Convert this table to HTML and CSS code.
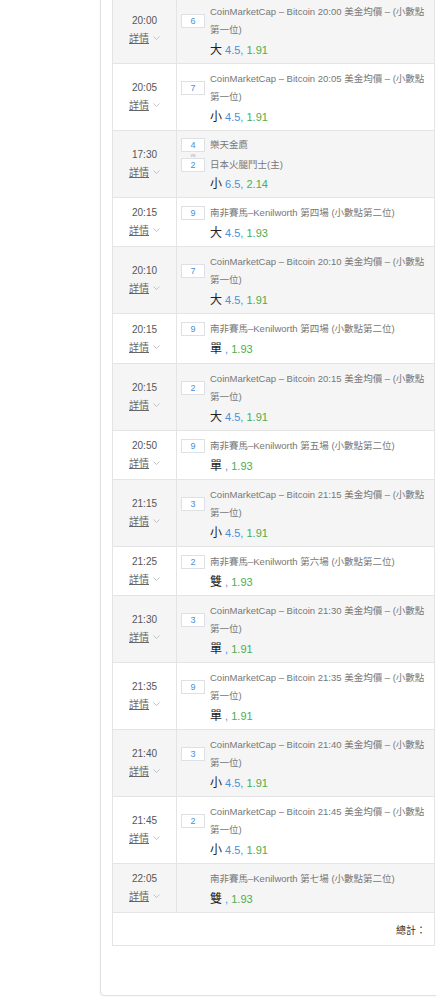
FILE: index.html
```html
<html>
<head>
    <meta charset="utf-8">
    <link rel="stylesheet" href="styles.css">
</head>
<body>
    <div class="panel">
        <table class="bets">
            <colgroup>
                <col class="col-time">
                <col>
            </colgroup>
            <tr class="alt">
                <td class="time">20:00<br><a class="more">詳情</a><svg class="chev" width="7" height="4" viewBox="0 0 7 4"><path d="M0.5 0.5L3.5 3.5L6.5 0.5"/></svg></td>
                <td class="info">
                    <div class="head"><span class="num">6</span><span class="title">CoinMarketCap – Bitcoin 20:00 美金均價 – (小數點第一位)</span></div>
                    <div class="bet"><span class="pick">大</span> <span class="line">4.5,</span> <span class="odds">1.91</span></div>
                </td>
            </tr>
            <tr>
                <td class="time">20:05<br><a class="more">詳情</a><svg class="chev" width="7" height="4" viewBox="0 0 7 4"><path d="M0.5 0.5L3.5 3.5L6.5 0.5"/></svg></td>
                <td class="info">
                    <div class="head"><span class="num">7</span><span class="title">CoinMarketCap – Bitcoin 20:05 美金均價 – (小數點第一位)</span></div>
                    <div class="bet"><span class="pick">小</span> <span class="line">4.5,</span> <span class="odds">1.91</span></div>
                </td>
            </tr>
            <tr class="alt">
                <td class="time">17:30<br><a class="more">詳情</a><svg class="chev" width="7" height="4" viewBox="0 0 7 4"><path d="M0.5 0.5L3.5 3.5L6.5 0.5"/></svg></td>
                <td class="info">
                    <div class="match">
                        <div class="team"><span class="num">4</span><span class="title">樂天金鷹</span></div>
                        <div class="vs">vs</div>
                        <div class="team"><span class="num">2</span><span class="title">日本火腿鬥士(主)</span></div>
                    </div>
                    <div class="bet"><span class="pick">小</span> <span class="line">6.5,</span> <span class="odds">2.14</span></div>
                </td>
            </tr>
            <tr>
                <td class="time">20:15<br><a class="more">詳情</a><svg class="chev" width="7" height="4" viewBox="0 0 7 4"><path d="M0.5 0.5L3.5 3.5L6.5 0.5"/></svg></td>
                <td class="info">
                    <div class="head"><span class="num">9</span><span class="title">南非賽馬–Kenilworth 第四場 (小數點第二位)</span></div>
                    <div class="bet"><span class="pick">大</span> <span class="line">4.5,</span> <span class="odds">1.93</span></div>
                </td>
            </tr>
            <tr class="alt">
                <td class="time">20:10<br><a class="more">詳情</a><svg class="chev" width="7" height="4" viewBox="0 0 7 4"><path d="M0.5 0.5L3.5 3.5L6.5 0.5"/></svg></td>
                <td class="info">
                    <div class="head"><span class="num">7</span><span class="title">CoinMarketCap – Bitcoin 20:10 美金均價 – (小數點第一位)</span></div>
                    <div class="bet"><span class="pick">大</span> <span class="line">4.5,</span> <span class="odds">1.91</span></div>
                </td>
            </tr>
            <tr>
                <td class="time">20:15<br><a class="more">詳情</a><svg class="chev" width="7" height="4" viewBox="0 0 7 4"><path d="M0.5 0.5L3.5 3.5L6.5 0.5"/></svg></td>
                <td class="info">
                    <div class="head"><span class="num">9</span><span class="title">南非賽馬–Kenilworth 第四場 (小數點第二位)</span></div>
                    <div class="bet"><span class="pick">單</span> <span class="line">,</span> <span class="odds">1.93</span></div>
                </td>
            </tr>
            <tr class="alt">
                <td class="time">20:15<br><a class="more">詳情</a><svg class="chev" width="7" height="4" viewBox="0 0 7 4"><path d="M0.5 0.5L3.5 3.5L6.5 0.5"/></svg></td>
                <td class="info">
                    <div class="head"><span class="num">2</span><span class="title">CoinMarketCap – Bitcoin 20:15 美金均價 – (小數點第一位)</span></div>
                    <div class="bet"><span class="pick">大</span> <span class="line">4.5,</span> <span class="odds">1.91</span></div>
                </td>
            </tr>
            <tr>
                <td class="time">20:50<br><a class="more">詳情</a><svg class="chev" width="7" height="4" viewBox="0 0 7 4"><path d="M0.5 0.5L3.5 3.5L6.5 0.5"/></svg></td>
                <td class="info">
                    <div class="head"><span class="num">9</span><span class="title">南非賽馬–Kenilworth 第五場 (小數點第二位)</span></div>
                    <div class="bet"><span class="pick">單</span> <span class="line">,</span> <span class="odds">1.93</span></div>
                </td>
            </tr>
            <tr class="alt">
                <td class="time">21:15<br><a class="more">詳情</a><svg class="chev" width="7" height="4" viewBox="0 0 7 4"><path d="M0.5 0.5L3.5 3.5L6.5 0.5"/></svg></td>
                <td class="info">
                    <div class="head"><span class="num">3</span><span class="title">CoinMarketCap – Bitcoin 21:15 美金均價 – (小數點第一位)</span></div>
                    <div class="bet"><span class="pick">小</span> <span class="line">4.5,</span> <span class="odds">1.91</span></div>
                </td>
            </tr>
            <tr>
                <td class="time">21:25<br><a class="more">詳情</a><svg class="chev" width="7" height="4" viewBox="0 0 7 4"><path d="M0.5 0.5L3.5 3.5L6.5 0.5"/></svg></td>
                <td class="info">
                    <div class="head"><span class="num">2</span><span class="title">南非賽馬–Kenilworth 第六場 (小數點第二位)</span></div>
                    <div class="bet"><span class="pick">雙</span> <span class="line">,</span> <span class="odds">1.93</span></div>
                </td>
            </tr>
            <tr class="alt">
                <td class="time">21:30<br><a class="more">詳情</a><svg class="chev" width="7" height="4" viewBox="0 0 7 4"><path d="M0.5 0.5L3.5 3.5L6.5 0.5"/></svg></td>
                <td class="info">
                    <div class="head"><span class="num">3</span><span class="title">CoinMarketCap – Bitcoin 21:30 美金均價 – (小數點第一位)</span></div>
                    <div class="bet"><span class="pick">單</span> <span class="line">,</span> <span class="odds">1.91</span></div>
                </td>
            </tr>
            <tr>
                <td class="time">21:35<br><a class="more">詳情</a><svg class="chev" width="7" height="4" viewBox="0 0 7 4"><path d="M0.5 0.5L3.5 3.5L6.5 0.5"/></svg></td>
                <td class="info">
                    <div class="head"><span class="num">9</span><span class="title">CoinMarketCap – Bitcoin 21:35 美金均價 – (小數點第一位)</span></div>
                    <div class="bet"><span class="pick">單</span> <span class="line">,</span> <span class="odds">1.91</span></div>
                </td>
            </tr>
            <tr class="alt">
                <td class="time">21:40<br><a class="more">詳情</a><svg class="chev" width="7" height="4" viewBox="0 0 7 4"><path d="M0.5 0.5L3.5 3.5L6.5 0.5"/></svg></td>
                <td class="info">
                    <div class="head"><span class="num">3</span><span class="title">CoinMarketCap – Bitcoin 21:40 美金均價 – (小數點第一位)</span></div>
                    <div class="bet"><span class="pick">小</span> <span class="line">4.5,</span> <span class="odds">1.91</span></div>
                </td>
            </tr>
            <tr>
                <td class="time">21:45<br><a class="more">詳情</a><svg class="chev" width="7" height="4" viewBox="0 0 7 4"><path d="M0.5 0.5L3.5 3.5L6.5 0.5"/></svg></td>
                <td class="info">
                    <div class="head"><span class="num">2</span><span class="title">CoinMarketCap – Bitcoin 21:45 美金均價 – (小數點第一位)</span></div>
                    <div class="bet"><span class="pick">小</span> <span class="line">4.5,</span> <span class="odds">1.91</span></div>
                </td>
            </tr>
            <tr class="alt">
                <td class="time">22:05<br><a class="more">詳情</a><svg class="chev" width="7" height="4" viewBox="0 0 7 4"><path d="M0.5 0.5L3.5 3.5L6.5 0.5"/></svg></td>
                <td class="info">
                    <div class="head"><span class="num empty"></span><span class="title">南非賽馬–Kenilworth 第七場 (小數點第二位)</span></div>
                    <div class="bet"><span class="pick">雙</span> <span class="line">,</span> <span class="odds">1.93</span></div>
                </td>
            </tr>
            <tr class="total">
                <td colspan="2">總計：</td>
            </tr>
        </table>
    </div>
</body>
</html>
```

FILE: styles.css
```css
body {
    margin: 0;
    overflow-x: hidden;
    font-family: "Liberation Sans", "Noto Sans CJK TC", sans-serif;
    background-color: #ffffff;
    color: #333333;
}

.panel {
    width: 323px;
    margin: -15px 0 0 100px;
    padding: 10px 11px 49px;
    border: 1px solid #e2e2e2;
    border-radius: 4px;
    box-shadow: 0 0 2px rgba(0, 0, 0, 0.08);
    background-color: #ffffff;
}

.bets {
    width: 323px;
    border-collapse: collapse;
    table-layout: fixed;
}

.col-time {
    width: 64px;
}

.bets td {
    border: 1px solid #e4e4e4;
    padding: 0;
}

.bets tr.alt td {
    background-color: #f5f5f5;
}

.time {
    text-align: center;
    vertical-align: middle;
    font-size: 10px;
    line-height: 18px;
    color: #555555;
}

.more {
    color: #666666;
    text-decoration: underline;
}

.chev {
    margin-left: 4px;
    vertical-align: 2px;
}

.chev path {
    fill: none;
    stroke: #b5b5b5;
    stroke-width: 0.8;
}

.bets td.info {
    vertical-align: top;
    padding: 6px 6px 2.1px 4px;
}

.head {
    display: flex;
    align-items: center;
}

.num {
    flex: none;
    width: 24px;
    height: 14px;
    box-sizing: border-box;
    margin-right: 5px;
    border: 1px solid #dde1e6;
    background-color: #ffffff;
    color: #4a90d9;
    font-size: 9px;
    line-height: 12px;
    text-align: center;
}

.num.empty {
    border: none;
    background: none;
}

.title {
    font-size: 9.5px;
    line-height: 18px;
    color: #777777;
}

.match {
    margin: 1px 0;
}

.team {
    display: flex;
    align-items: center;
    height: 14px;
}

.vs {
    width: 24px;
    height: 6px;
    font-size: 5px;
    line-height: 6px;
    text-align: center;
    color: #aaaaaa;
}

.bet {
    margin-left: 29px;
    font-size: 11px;
    line-height: 22px;
    color: #222222;
}

.pick {
    font-size: 12px;
}

.line {
    color: #4a90d9;
}

.odds {
    color: #4cae4c;
}

.total td {
    height: 33px;
    padding: 0 8px;
    text-align: right;
    font-size: 10px;
    color: #333333;
}
```
